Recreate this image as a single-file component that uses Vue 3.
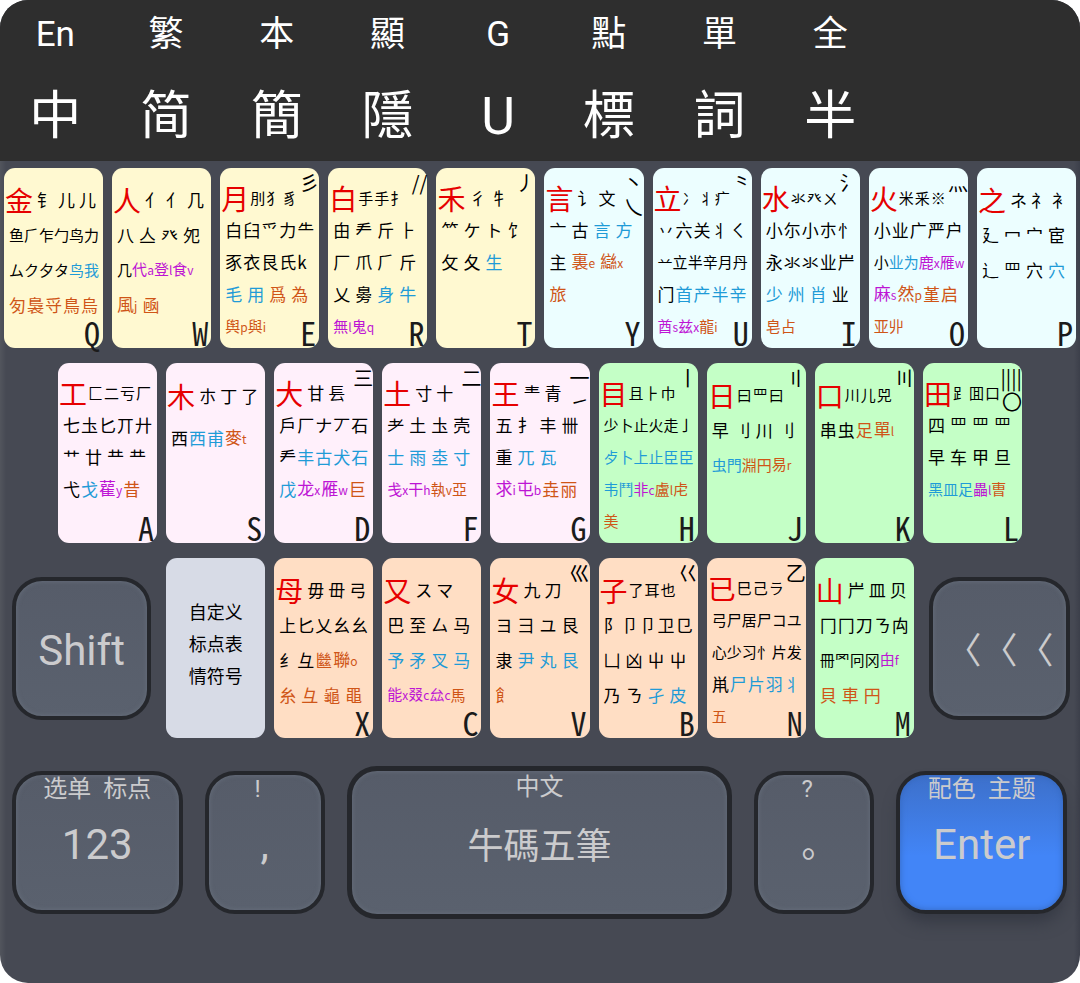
<script setup>
const modes = [
  ['En', '中'], ['繁', '简'], ['本', '簡'], ['顯', '隱'],
  ['G', 'U'], ['點', '標'], ['單', '詞'], ['全', '半'],
]

// Tokens are separated by spaces; |k |b |m |o switch the ink of what follows.
const key = (letter, tone, head, corner, rows, pitch = 'dense') => ({
  letter, tone, head, corner, pitch, rows: rows.map(parseRow),
})

function parseRow(text, index) {
  let ink = 'k'
  let weight = 0
  const cells = []
  for (const token of text.split(' ')) {
    if (token[0] === '|' && token.length === 2) {
      ink = token[1]
      continue
    }
    const match = token.match(/^(.+?)([a-z]?)$/u)
    cells.push({ glyph: match[1], code: match[2], ink })
    weight += match[2] ? 1.5 : 1
  }
  const fit = weight > 5 || index === 4 ? 'tight' : weight > 4 ? 'close' : 'loose'
  return { cells, fit }
}

const isCrowded = (k) => k.rows[0].cells.length + (k.corner.length ? 1 : 0) > 3

const topKeys = [
  key('Q', 'cream', '金', [], ['钅 儿 儿', '鱼 ⺁ 乍 勹 鸟 力', 'ム ク 夕 タ |b 鸟 我', '|o 匇 裊 寽 鳥 烏'], 'roomy'),
  key('W', 'cream', '人', [], ['亻 亻 几', '八 亼 癶 夗', '几 |m 代a 登l 食v', '|o 風j 凾'], 'roomy'),
  key('E', 'cream', '月', ['彡'], ['刖 犭 豸', '白 臼 爫 力 ⺧', '豕 衣 艮 氏 k', '|b 毛 用 |o 爲 為', '|o 舆p 與i']),
  key('R', 'cream', '白', ['//'], ['手 手 扌', '甶 龵 斤 ⺊', '厂 爪 ⺁ 斤', '乂 臱 |b 身 牛', '|m 無l 鬼q']),
  key('T', 'cream', '禾', ['丿'], ['彳 牜', '⺮ ケ ト 饣', '攵 夂 |b 生']),
  key('Y', 'ice', '言', ['丶', '乀'], ['讠 文', '亠 古 |b 言 方', '主 |o 裏e 䜌x', '|o 旅']),
  key('U', 'ice', '立', ['⺀'], ['冫 丬 疒', '丷 六 关 丬 ㄑ', '䒑 立 半 辛 月 丹', '门 |b 首 产 半 辛', '|m 酋s 兹x |o 龍i']),
  key('I', 'ice', '水', ['氵'], ['氺 癶 ㄨ', '小 尓 小 朩 忄', '永 氺 氺 业 屵', '|b 少 州 肖 |k 业', '|o 皂 占']),
  key('O', 'ice', '火', ['灬'], ['米 釆 ※', '小 业 广 严 户', '小 |b 业 为 |m 鹿x 雁w', '|m 麻s |o 然p 堇 启', '|o 亚 丱']),
  key('P', 'ice', '之', [], ['ネ 礻 衤', '廴 冖 宀 宦', '辶 罒 穴 |b 穴'], 'roomy'),
]

const homeKeys = [
  key('A', 'pink', '工', [], ['匚 二 亏 厂', '七 圡 匕 丌 廾', '艹 廿 龷 龷', '弋 |b 戈 |m 雚y |o 昔']),
  key('S', 'pink', '木', [], ['朩 丁 了', '西 |b 西 甫 |o 麥t'], 'wide'),
  key('D', 'pink', '大', ['三'], ['甘 镸', '戶 厂 ナ 丆 石', '龵 |b 丰 古 犬 石', '|b 戊 |m 龙x 雁w |o 巨']),
  key('F', 'pink', '土', ['二'], ['寸 十', '耂 土 圡 壳', '|b 士 雨 坴 寸', '|m 戋x 干h |o 執v 亞']),
  key('G', 'pink', '王', ['一', '㇀'], ['龶 青', '五 扌 丰 卌', '重 |b 兀 瓦', '|m 求i 屯b |o 垚 丽']),
  key('H', 'green', '目', ['丨'], ['且 ⺊ 巾', '少 卜 止 火 走 亅', '|b 歺 卜 上 止 臣 臣', '|b 韦 鬥 |m 非c |o 盧l 虍', '|o 美']),
  key('J', 'green', '日', ['〢'], ['曰 罒 曰', '早 刂 川 刂', '|b 虫 門 |o 淵 円 易r'], 'roomy'),
  key('K', 'green', '口', ['〣'], ['川 儿 兕', '串 虫 |o 足 單l'], 'roomy'),
  key('L', 'green', '田', ['||||', '〇'], ['⻊ 囬 口', '四 罒 罒 罒', '早 车 甲 旦', '|b 黑 皿 足 |m 畾l |o 曺']),
]

const baseKeys = [
  key('X', 'peach', '母', [], ['毋 毌 弓', '上 匕 乂 幺 幺', '纟 彑 |o 㡭 聯o', '|o 糸 彑 龜 黽'], 'roomy'),
  key('C', 'peach', '又', [], ['ス マ', '巴 至 厶 马', '|b 予 矛 叉 马', '|m 能x 叕c 厽c |o 馬'], 'roomy'),
  key('V', 'peach', '女', ['巛'], ['九 刀', 'ヨ ⺕ ユ 艮', '隶 |b 尹 丸 艮', '|o 飠'], 'roomy'),
  key('B', 'peach', '子', ['巜'], ['了 耳 也', '阝 卩 卩 卫 㔾', '凵 凶 屮 屮', '乃 ㄋ |b 孑 皮'], 'roomy'),
  key('N', 'peach', '已', ['乙'], ['巳 己 ラ', '弓 尸 居 尸 コ ユ', '心 少 习 忄 片 发', '鼡 |b 尸 片 羽 丬', '|o 五']),
  key('M', 'green', '山', [], ['屵 皿 贝', '冂 冂 刀 ㄋ 禸', '冊 罓 冋 冈 |m 甶f', '|o 貝 車 円'], 'roomy'),
]

const letterRows = [
  { name: 'top', keys: topKeys },
  { name: 'home', keys: homeKeys },
  { name: 'base', keys: baseKeys },
]
const note = ['自定义', '标点表', '情符号']
</script>

<template>
  <main class="keyboard">
    <header class="modes">
      <button v-for="pair in modes" :key="pair[0]" class="mode" type="button">
        <span class="mode-small">{{ pair[0] }}</span>
        <span class="mode-large">{{ pair[1] }}</span>
      </button>
    </header>

    <div v-for="row in letterRows" :key="row.name" class="row" :class="row.name">
      <button v-if="row.name === 'base'" class="slab shift" type="button">Shift</button>
      <div class="cards">
        <button v-if="row.name === 'base'" class="card note" type="button">
          <span v-for="line in note" :key="line">{{ line }}</span>
        </button>
        <button v-for="k in row.keys" :key="k.letter" class="card" :class="[k.tone, k.pitch]" type="button">
          <span v-for="(line, i) in k.rows" :key="i" class="line" :class="[line.fit, { first: i === 0, crowded: i === 0 && isCrowded(k) }]">
            <span v-if="i === 0" class="head">{{ k.head }}</span>
            <span v-for="(cell, j) in line.cells" :key="j" class="cell" :class="cell.ink">{{ cell.glyph }}<small v-if="cell.code">{{ cell.code }}</small></span>
          </span>
          <span v-if="k.corner.length" class="corner">
            <span v-for="mark in k.corner" :key="mark">{{ mark }}</span>
          </span>
          <span class="letter">{{ k.letter }}</span>
        </button>
      </div>
      <button v-if="row.name === 'base'" class="slab back" type="button"><span v-for="n in 3" :key="n">〈</span></button>
    </div>

    <footer class="functions">
      <button class="slab" type="button"><span class="hint"><span>选单</span><span>标点</span></span>123</button>
      <button class="slab" type="button"><span class="hint mark">!</span>,</button>
      <button class="slab space" type="button"><span class="hint">中文</span>牛碼五筆</button>
      <button class="slab stop" type="button"><span class="hint mark">?</span>。</button>
      <button class="slab enter" type="button"><span class="hint"><span>配色</span><span>主题</span></span>Enter</button>
    </footer>
  </main>
</template>

<style>
body {
  margin: 0;
  background: #fff;
}
</style>

<style scoped>
.keyboard {
  min-height: 100vh;
  box-sizing: border-box;
  padding-bottom: 64px;
  overflow: hidden;
  border-radius: 28px;
  background: linear-gradient(90deg, #52555d 0, #464953 6px, #464953 calc(100% - 6px), #3c3f4a 100%);
  font-family: Roboto, "Noto Sans CJK SC", sans-serif;
}

button {
  margin: 0;
  padding: 0;
  border: 0;
  font-family: inherit;
  cursor: pointer;
}

.modes {
  display: grid;
  grid-template-columns: repeat(8, 1fr);
  height: 161px;
  margin-bottom: 7px;
  padding-right: 18%;
  box-sizing: border-box;
  background: #2e2e2e;
}

.mode {
  display: flex;
  flex-direction: column;
  align-items: center;
  background: none;
  color: #fff;
  white-space: nowrap;
}

.mode-small {
  margin-top: 10px;
  font-size: 35px;
  line-height: 50px;
}

.mode-large {
  margin-top: 23px;
  font-size: 52px;
  line-height: 68px;
}

.row {
  margin-bottom: 15px;
  padding: 0 4px;
}

.row.home {
  padding: 0 58px;
}

.row.base {
  display: grid;
  grid-template-columns: 139fr 747fr 141fr;
  gap: 15px;
  align-items: center;
  margin-bottom: 28px;
  padding: 0 10px 0 12px;
}

.cards {
  display: grid;
  grid-auto-flow: column;
  grid-auto-columns: minmax(0, 1fr);
  gap: 9px;
}

.card {
  position: relative;
  display: flex;
  flex-direction: column;
  height: 180px;
  padding-top: 14px;
  border-radius: 11px;
  color: #000;
  font-family: "Noto Sans CJK SC", "Noto Sans CJK TC", sans-serif;
  text-align: left;
}

.cream { background: #fff9d1; }
.ice { background: #ecfeff; }
.pink { background: #fff0fb; }
.green { background: #c4ffc6; }
.peach { background: #ffdec4; }

.note {
  align-items: center;
  justify-content: center;
  padding-top: 0;
  padding-bottom: 10px;
  background: #d7dbe6;
  font-size: 18px;
  line-height: 32px;
}

.line {
  display: flex;
  flex: none;
  align-items: center;
  height: 32px;
  padding-left: 5px;
  gap: 5px;
  font-size: 17px;
  line-height: 24px;
  white-space: nowrap;
}

.roomy .line { height: 35px; }
.wide .line { height: 46px; }
.wide .line.first { height: 38px; }
.line.close { gap: 1px; }
.line.tight { gap: 0; font-size: 15px; }

.line.first {
  padding-left: 1px;
  gap: 4px;
}

.line.crowded {
  gap: 1px;
  font-size: 15px;
}

.head {
  color: #e60000;
  font-size: 28px;
  line-height: 32px;
}

.cell small { font-size: 12px; }
.b { color: #1f9bd7; }
.m { color: #bd15d4; }
.o { color: #cf5517; }

.corner {
  position: absolute;
  top: 3px;
  right: 0;
  display: flex;
  flex-direction: column;
  align-items: flex-end;
  font-size: 20px;
  line-height: 24px;
}

.letter {
  position: absolute;
  right: 3px;
  bottom: 4px;
  color: #1b1b1b;
  font-family: "Noto Sans Mono CJK SC", "Liberation Mono", monospace;
  font-size: 32px;
  line-height: 24px;
}

.slab {
  position: relative;
  display: flex;
  align-items: center;
  justify-content: center;
  height: 143px;
  box-sizing: border-box;
  padding-top: 4px;
  border: 4px solid #25272c;
  border-radius: 30px;
  background: linear-gradient(#565c69, #5a616e);
  box-shadow: inset 0 0 5px #68707d;
  color: #cbcbcd;
  font-size: 42px;
  white-space: nowrap;
}

.back {
  padding-top: 0;
  font-family: "Noto Sans CJK SC", sans-serif;
  font-size: 36px;
}

.functions {
  display: grid;
  grid-template-columns: 170fr 120fr 384fr 120fr 170fr;
  gap: 22px;
  align-items: center;
  padding: 0 13px 0 12px;
}

.hint {
  position: absolute;
  top: 0;
  left: 0;
  right: 0;
  display: flex;
  justify-content: center;
  gap: 12px;
  font-size: 24px;
  line-height: 28px;
}

.hint.mark { right: 14px; }

.space {
  height: 153px;
  padding-top: 0;
  border-width: 5px;
  font-size: 36px;
}

.space .hint { top: 2px; }

.stop {
  padding-top: 18px;
  padding-right: 12px;
  font-family: "Noto Sans CJK TC", sans-serif;
  font-size: 36px;
}

.stop .hint { font-family: Roboto, sans-serif; }

.enter {
  background: linear-gradient(#3d70ca, #4285f7 60%, #4285f7);
  box-shadow: inset 0 0 6px #3467bd, 0 12px 16px -4px #353944;
}
</style>
